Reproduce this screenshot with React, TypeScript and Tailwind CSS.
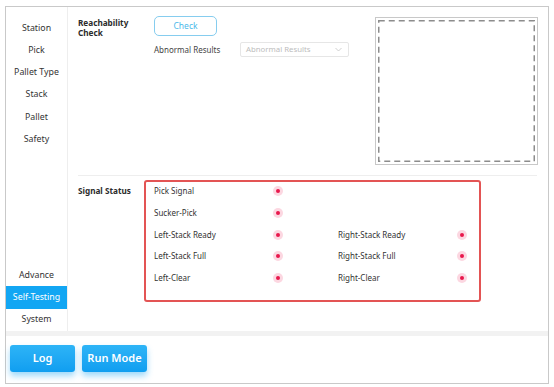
import React from "react";

const navTop = ["Station", "Pick", "Pallet Type", "Stack", "Pallet", "Safety"];
const navBottom = ["Advance", "Self-Testing", "System"];

const signals: [string, string | null][] = [
  ["Pick Signal", null],
  ["Sucker-Pick", null],
  ["Left-Stack Ready", "Right-Stack Ready"],
  ["Left-Stack Full", "Right-Stack Full"],
  ["Left-Clear", "Right-Clear"],
];

function Dot() {
  return (
    <span className="w-[10px] h-[10px] rounded-full bg-[#fcd7e1] flex items-center justify-center">
      <span className="w-[4px] h-[4px] rounded-full bg-[#e8184c]" />
    </span>
  );
}

export default function App() {
  return (
    <div className="w-[554px] h-[387px] bg-white pt-[6px] pl-[5px] font-['Noto_Sans',sans-serif] text-[#333]">
      <div className="w-[544px] h-[378px] border border-[#c9c9c9] flex flex-col">
        <div className="flex h-[324px]">
          {/* Sidebar */}
          <div className="w-[62px] border-r border-[#eeeeee] flex flex-col justify-between pt-[10px]">
            <div className="flex flex-col">
              {navTop.map((n) => (
                <div key={n} className="h-[22.3px] flex items-center justify-center text-[8.8px]">
                  {n}
                </div>
              ))}
            </div>
            <div className="flex flex-col">
              {navBottom.map((n) => (
                <div
                  key={n}
                  className={`h-[22.3px] flex items-center justify-center text-[8.8px] ${
                    n === "Self-Testing" ? "bg-[#12a6f3] text-white" : ""
                  }`}
                >
                  {n}
                </div>
              ))}
            </div>
          </div>

          {/* Main */}
          <div className="flex-1 pl-[10px] pr-[10px]">
            <div className="flex pt-[9px] h-[168px]">
              <div className="w-[76px] font-bold text-[8.2px] leading-[10px] pt-[2px] text-[#2b2b2b]">
                Reachability
                <br />
                Check
              </div>
              <div className="flex flex-col">
                <button className="w-[63px] h-[20px] border border-[#86cdef] rounded-[5px] text-[8.5px] text-[#4cb9ea] flex items-center justify-center">
                  Check
                </button>
                <div className="flex items-center mt-[6px]">
                  <span className="w-[86px] text-[8px] text-[#444]">Abnormal Results</span>
                  <div className="w-[109px] h-[15px] border border-[#e6e6e6] rounded-[2px] flex items-center justify-between pl-[5px] pr-[6px]">
                    <span className="text-[7.8px] text-[#bdbdbd]">Abnormal Results</span>
                    <svg width="7" height="5" viewBox="0 0 7 5" fill="none" stroke="#c4c4c4" strokeWidth="0.8">
                      <path d="M0.5 1 L3.5 4 L6.5 1" />
                    </svg>
                  </div>
                </div>
              </div>
              <div className="ml-auto mt-[1px] w-[163px] h-[148px] border border-[#c8c8c8] p-[2px]">
                <svg className="w-full h-full block" viewBox="0 0 157 142" preserveAspectRatio="none">
                  <rect x="0.75" y="0.75" width="155.5" height="140.5" fill="none" stroke="#8c8c8c" strokeWidth="1.5" strokeDasharray="6 4" />
                </svg>
              </div>
            </div>
            <div className="h-px bg-[#eeeeee] mr-[1px]" />
            <div className="flex pt-[4px]">
              <div className="w-[66px] font-bold text-[8.2px] text-[#2b2b2b] pt-[5px]">Signal Status</div>
              <div className="w-[337px] h-[122px] border-2 border-[#e35454] rounded-[3px] pl-[8px] pt-[1px] flex flex-col gap-[5.75px]">
                {signals.map(([l, r]) => (
                  <div key={l} className="h-[16px] flex items-center text-[8px] text-[#333]">
                    <span className="w-[119px]">{l}</span>
                    <Dot />
                    {r && (
                      <>
                        <span className="w-[55px]" />
                        <span className="w-[119px]">{r}</span>
                        <Dot />
                      </>
                    )}
                  </div>
                ))}
              </div>
            </div>
          </div>
        </div>
        <div className="h-[5px] bg-[#f2f2f2]" />
        <div className="flex gap-[7px] pl-[4px] pt-[9px]">
          {["Log", "Run Mode"].map((b) => (
            <button
              key={b}
              className="w-[65px] h-[27px] rounded-[3px] bg-gradient-to-b from-[#2db4f7] to-[#0f9ef0] text-white text-[11px] font-semibold shadow-[0_4px_6px_rgba(40,170,245,0.45)]"
            >
              {b}
            </button>
          ))}
        </div>
      </div>
    </div>
  );
}
